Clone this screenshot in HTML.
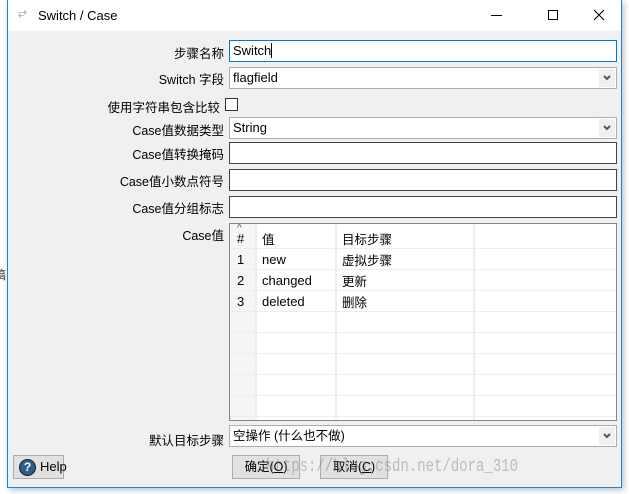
<!DOCTYPE html>
<html><head><meta charset="utf-8"><style>
*{box-sizing:border-box;margin:0;padding:0}
body{width:629px;height:494px;background:#fff;position:relative;overflow:hidden;font-family:"Liberation Sans","Noto Sans CJK SC",sans-serif;font-size:13px;color:#000}
.win{position:absolute;left:7px;top:0;width:615px;height:488px;background:#f0f0f0;border:1px solid #1883d7;border-top:none;box-shadow:2px 2px 6px rgba(0,0,0,.25)}
.title{position:absolute;left:0;top:0;width:613px;height:31px;background:#fff}
.abs{position:absolute}
.lbl{position:absolute;right:397px;text-align:right;white-space:nowrap;font-size:12.5px}
.in{position:absolute;left:221px;width:388px;height:22px;background:#fff;border:1px solid #7a7a7a;padding:2px 3px;line-height:16px}
.cb{position:absolute;left:221px;width:388px;height:22px;background:#fff;border:1px solid #adadad;padding:2px 3px;line-height:16px}
.cb svg{position:absolute;right:1px;top:1px;background:#f0f0f0}
.tbl{position:absolute;left:221px;top:223px;width:388px;height:198px;background:#fff;border:1px solid #828790;overflow:hidden}
.hl{position:absolute;left:0;width:386px;height:1px;background:#eaeef4}
.vl{position:absolute;top:0;width:2px;height:196px;background:#eaeef4}
.btn{position:absolute;height:24px;background:#e1e1e1;border:1px solid #adadad;text-align:center;line-height:22px}
.cj{font-size:12.5px}
</style></head><body>
<div class="win">
 <div class="title">
  <span class="abs" style="left:10px;top:7px;color:#888;font-size:11px">⥂</span>
  <span class="abs" style="left:30px;top:8px;font-size:13px">Switch / Case</span>
  <div class="abs" style="left:483px;top:15px;width:11px;height:1px;background:#000"></div>
  <div class="abs" style="left:540px;top:10px;width:10px;height:10px;border:1px solid #000"></div>
  <svg class="abs" style="left:585px;top:9px" width="12" height="12"><path d="M1 1L11 11M11 1L1 11" stroke="#000" stroke-width="1.1"/></svg>
 </div>
 <div class="lbl" style="top:43px">步骤名称</div>
 <div class="in" style="top:40px;border:1px solid #0078d7">Switch<span style="display:inline-block;width:1px;height:15px;background:#000;vertical-align:-3px"></span></div>
 <div class="lbl" style="top:69px">Switch 字段</div>
 <div class="cb" style="top:67px">flagfield<svg width="16" height="18"><path d="M5 7l3 3 3-3" stroke="#555" stroke-width="2" fill="none"/></svg></div>
 <div class="lbl" style="top:97px;right:401px">使用字符串包含比较</div>
 <div class="abs" style="left:217px;top:98px;width:13px;height:13px;border:1px solid #333;background:#fff"></div>
 <div class="lbl" style="top:120px">Case值数据类型</div>
 <div class="cb" style="top:117px">String<svg width="16" height="18"><path d="M5 7l3 3 3-3" stroke="#555" stroke-width="2" fill="none"/></svg></div>
 <div class="lbl" style="top:144px">Case值转换掩码</div>
 <div class="in" style="top:142px;border-color:#444"></div>
 <div class="lbl" style="top:171px">Case值小数点符号</div>
 <div class="in" style="top:169px;border-color:#444"></div>
 <div class="lbl" style="top:198px">Case值分组标志</div>
 <div class="in" style="top:196px;border-color:#444"></div>
 <div class="lbl" style="top:225px">Case值</div>
 <div class="tbl">
  <div class="abs" style="left:0;top:0;width:25px;height:196px;background:#f5f5f5"></div>
  <div class="vl" style="left:25px"></div><div class="vl" style="left:105px"></div><div class="vl" style="left:243px"></div>
  <div class="hl" style="top:24px"></div><div class="hl" style="top:45px"></div><div class="hl" style="top:66px"></div><div class="hl" style="top:87px"></div><div class="hl" style="top:108px"></div><div class="hl" style="top:129px"></div><div class="hl" style="top:150px"></div><div class="hl" style="top:171px"></div><div class="hl" style="top:192px"></div>
  <span class="abs" style="left:7px;top:-1px;font-size:10px;color:#555">^</span>
  <span class="abs" style="left:7px;top:7px">#</span>
  <span class="abs cj" style="left:32px;top:5px">值</span>
  <span class="abs cj" style="left:112px;top:5px">目标步骤</span>
  <span class="abs" style="left:7px;top:28px">1</span><span class="abs" style="left:32px;top:28px">new</span><span class="abs cj" style="left:112px;top:26px">虚拟步骤</span>
  <span class="abs" style="left:7px;top:49px">2</span><span class="abs" style="left:32px;top:49px">changed</span><span class="abs cj" style="left:112px;top:47px">更新</span>
  <span class="abs" style="left:7px;top:70px">3</span><span class="abs" style="left:32px;top:70px">deleted</span><span class="abs cj" style="left:112px;top:68px">删除</span>
 </div>
 <div class="lbl" style="top:430px">默认目标步骤</div>
 <div class="cb" style="top:425px"><span class="cj">空操作 (什么也不做)</span><svg width="16" height="18"><path d="M5 7l3 3 3-3" stroke="#555" stroke-width="2" fill="none"/></svg></div>
 <div class="btn" style="left:5px;top:455px;width:51px;text-align:left;padding-left:26px">Help</div>
 <div class="abs" style="left:11px;top:459px;width:17px;height:17px;border-radius:50%;background:#2d5d8a;border:1px solid #123;color:#fff;font-weight:bold;font-size:12px;text-align:center;line-height:15px">?</div>
 <div class="btn cj" style="left:224px;top:455px;width:68px">确定(<u>O</u>)</div>
 <div class="btn cj" style="left:312px;top:455px;width:68px">取消(<u>C</u>)</div>
 <div class="abs" style="left:258px;top:456px;font-family:'Liberation Mono',monospace;font-size:14px;color:rgba(110,110,110,.4);white-space:nowrap;transform:scaleY(1.35);transform-origin:0 0">https://blog.csdn.net/dora_310</div>
</div>
<div class="abs" style="left:-6px;top:266px;font-size:12px;color:#333">缟</div>
</body></html>
